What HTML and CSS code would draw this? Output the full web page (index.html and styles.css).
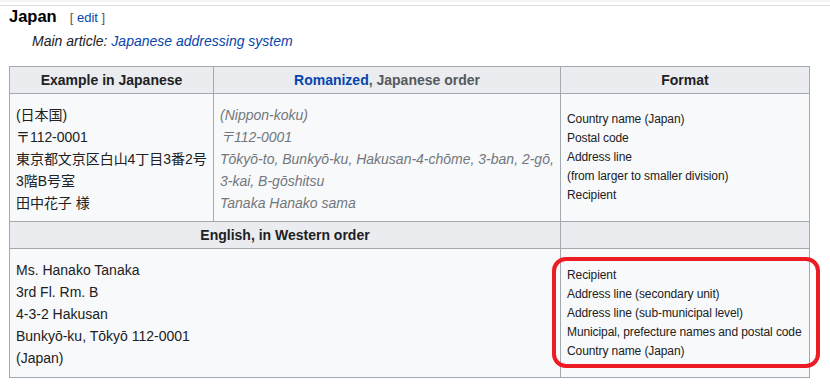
FILE: index.html
```html
<!DOCTYPE html>
<html lang="en">
<head>
<meta charset="utf-8">
<title>Japan</title>
<link rel="stylesheet" href="styles.css">
</head>
<body>
<div class="chrome"></div>
<h3 class="section-heading">Japan<span class="editsection"><span class="bracket">[</span> <a class="link" href="#">edit</a> <span class="bracket">]</span></span></h3>
<div class="hatnote">Main article: <a class="link" href="#">Japanese addressing system</a></div>
<div class="table-wrap">
  <table class="wikitable">
    <colgroup>
      <col class="c1">
      <col class="c2">
      <col class="c3">
    </colgroup>
    <tr>
      <th>Example in Japanese</th>
      <th><a class="link" href="#">Romanized</a><span class="th-muted">, Japanese order</span></th>
      <th>Format</th>
    </tr>
    <tr class="row-jp">
      <td class="jp">(日本国)<br>〒112-0001<br>東京都文京区白山4丁目3番2号<br>3階B号室<br>田中花子 様</td>
      <td class="roman">(Nippon-koku)<br>〒112-0001<br>Tōkyō-to, Bunkyō-ku, Hakusan-4-chōme, 3-ban, 2-gō, 3-kai, B-gōshitsu<br>Tanaka Hanako sama</td>
      <td class="format">Country name (Japan)<br>Postal code<br>Address line<br>(from larger to smaller division)<br>Recipient</td>
    </tr>
    <tr>
      <th colspan="2">English, in Western order</th>
      <th></th>
    </tr>
    <tr>
      <td colspan="2" class="en">Ms. Hanako Tanaka<br>3rd Fl. Rm. B<br>4-3-2 Hakusan<br>Bunkyō-ku, Tōkyō 112-0001<br>(Japan)</td>
      <td class="format">Recipient<br>Address line (secondary unit)<br>Address line (sub-municipal level)<br>Municipal, prefecture names and postal code<br>Country name (Japan)</td>
    </tr>
  </table>
  <div class="highlight"></div>
</div>
</body>
</html>
```
FILE: styles.css
```css
html, body {
  margin: 0;
  padding: 0;
  background: #ffffff;
}

body {
  font-family: "Liberation Sans", Arial, "Noto Sans CJK JP", sans-serif;
  color: #202122;
}

.chrome {
  height: 6px;
  box-sizing: border-box;
  border-top: 2px solid #f5f5f5;
  border-bottom: 1px solid #dadcdf;
}

.section-heading {
  margin: 0;
  padding-left: 9px;
  font-size: 16.5px;
  line-height: 20px;
  font-weight: bold;
  color: #000000;
}

.editsection {
  margin-left: 13px;
  font-size: 13px;
  font-weight: normal;
}

.bracket {
  color: #54595d;
}

.link {
  color: #0645ad;
  text-decoration: none;
}

.hatnote {
  margin: 2px 0 0 0;
  padding-left: 32px;
  font-size: 14px;
  line-height: 22px;
  font-style: italic;
  color: #202122;
}

.table-wrap {
  position: relative;
  margin: 14px 0 0 9px;
  width: 800px;
}

.wikitable {
  border-collapse: collapse;
  table-layout: fixed;
  width: 800px;
  background: #f8f9fa;
  border: 1px solid #a2a9b1;
  font-size: 14px;
  line-height: 22px;
  color: #202122;
}

.c1 { width: 204px; }
.c2 { width: 347px; }
.c3 { width: 249px; }

.wikitable th {
  background: #eaecf0;
  border: 1px solid #a2a9b1;
  padding: 2px 6px;
  font-weight: bold;
  text-align: center;
  height: 22px;
}

.th-muted {
  color: #54595d;
}

.wikitable td {
  border: 1px solid #a2a9b1;
  padding: 10px 6px 8px 6px;
  vertical-align: top;
  text-align: left;
}

.wikitable .row-jp td {
  padding-bottom: 7px;
}

.wikitable td.jp {
  white-space: nowrap;
  overflow: visible;
  letter-spacing: -0.05px;
}

.roman {
  font-style: italic;
  color: #72777d;
}

.wikitable td.format {
  font-size: 12px;
  line-height: 19px;
  vertical-align: middle;
  padding-top: 8px;
  padding-bottom: 8px;
  white-space: nowrap;
  letter-spacing: -0.1px;
}

.highlight {
  position: absolute;
  left: 543px;
  top: 191px;
  width: 268px;
  height: 111px;
  box-sizing: border-box;
  border: 4px solid #ed1c24;
  border-radius: 14px;
  pointer-events: none;
}
```
